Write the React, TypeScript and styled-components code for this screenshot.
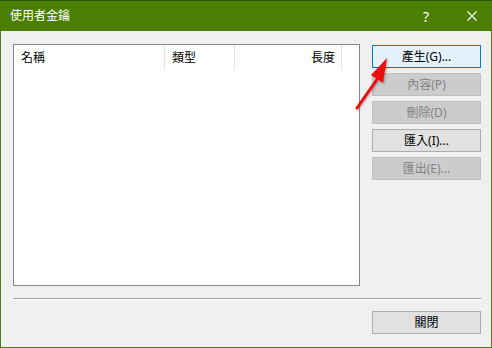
import React from "react";
import styled, { createGlobalStyle } from "styled-components";

const Global = createGlobalStyle`
  html, body { margin: 0; padding: 0; background: #f0f0f0; }
  * { box-sizing: border-box; }
  body { font-family: "Noto Sans", "Noto Sans CJK TC", sans-serif; font-size: 12px; }
`;

const Win = styled.div`
  width: 492px;
  height: 348px;
  border: 1px solid #4c7f10;
  border-top: none;
  background: #f0f0f0;
  display: flex;
  flex-direction: column;
  position: relative;
`;

const TitleBar = styled.div`
  height: 31px;
  margin: 0 -1px;
  background: #4a7f03;
  border-top: 1px solid #2f4f05;
  color: #fff;
  display: flex;
  align-items: center;
  padding-left: 10px;
  font-size: 12px;
`;

const Title = styled.span`
  flex: 1;
  line-height: 1;
  padding-bottom: 1px;
`;

const TitleBtn = styled.div<{ $w: number }>`
  width: ${(p) => p.$w}px;
  height: 30px;
  display: flex;
  align-items: center;
  justify-content: center;
  color: #fff;
  font-size: 14px;
`;

const Body = styled.div`
  flex: 1;
  display: flex;
  flex-direction: column;
  padding: 13px 10px 0 12px;
`;

const Top = styled.div`
  display: flex;
  gap: 12px;
`;

const List = styled.div`
  width: 348px;
  height: 242px;
  background: #fff;
  border: 1px solid #828790;
`;

const Header = styled.div`
  display: flex;
  height: 25px;
`;

const Col = styled.div<{ $w: number; $right?: boolean }>`
  width: ${(p) => p.$w}px;
  border-right: 1px solid #e5e5e5;
  display: flex;
  align-items: center;
  justify-content: ${(p) => (p.$right ? "flex-end" : "flex-start")};
  padding: ${(p) => (p.$right ? "0 6px 1px 0" : "0 0 1px 7px")};
  color: #000;
`;

const Buttons = styled.div`
  margin-top: 1px;
  display: flex;
  flex-direction: column;
  gap: 5px;
`;

const Btn = styled.div<{ $state?: "default" | "disabled" | "normal" }>`
  width: 109px;
  height: 23px;
  display: flex;
  align-items: center;
  justify-content: center;
  padding-bottom: 1px;
  border: 1px solid
    ${(p) =>
      p.$state === "default" ? "#0078d7" : p.$state === "disabled" ? "#bfbfbf" : "#adadad"};
  background: ${(p) =>
    p.$state === "default" ? "#e5f1fb" : p.$state === "disabled" ? "#cccccc" : "#e1e1e1"};
  color: ${(p) => (p.$state === "disabled" ? "#838383" : "#000")};
`;

const Sep = styled.div`
  margin-top: 12px;
  height: 2px;
  border-top: 1px solid #a0a0a0;
  border-bottom: 1px solid #fff;
`;

const Footer = styled.div`
  display: flex;
  justify-content: flex-end;
  margin-top: 11px;
`;

const Arrow = styled.svg`
  position: absolute;
  left: 350px;
  top: 52px;
  pointer-events: none;
`;

export default function App() {
  return (
    <>
      <Global />
      <Win>
        <TitleBar>
          <Title>使用者金鑰</Title>
          <TitleBtn $w={52}>?</TitleBtn>
          <TitleBtn $w={40}>
            <svg width="10" height="10" viewBox="0 0 10 10">
              <path d="M0.5 0.5 L9.5 9.5 M9.5 0.5 L0.5 9.5" stroke="#fff" strokeWidth="1.1" fill="none" />
            </svg>
          </TitleBtn>
        </TitleBar>
        <Body>
          <Top>
            <List>
              <Header>
                <Col $w={151}>名稱</Col>
                <Col $w={70}>類型</Col>
                <Col $w={107} $right>
                  長度
                </Col>
              </Header>
            </List>
            <Buttons>
              <Btn $state="default">產生(G)...</Btn>
              <Btn $state="disabled">內容(P)</Btn>
              <Btn $state="disabled">刪除(D)</Btn>
              <Btn $state="normal">匯入(I)...</Btn>
              <Btn $state="disabled">匯出(E)...</Btn>
            </Buttons>
          </Top>
          <Sep />
          <Footer>
            <Btn $state="normal">關閉</Btn>
          </Footer>
        </Body>
        <Arrow width="45" height="62" viewBox="0 0 45 62">
          <defs>
            <filter id="sh" x="-30%" y="-30%" width="160%" height="160%">
              <feDropShadow dx="1" dy="1" stdDeviation="1" floodColor="#000" floodOpacity="0.3" />
            </filter>
          </defs>
          <g filter="url(#sh)">
            <path d="M6 56 L27 26" stroke="#ee1111" strokeWidth="3" strokeLinecap="round" />
            <path d="M36 6 L20 23 L32 31 Z" fill="#ee1111" />
          </g>
        </Arrow>
      </Win>
    </>
  );
}
